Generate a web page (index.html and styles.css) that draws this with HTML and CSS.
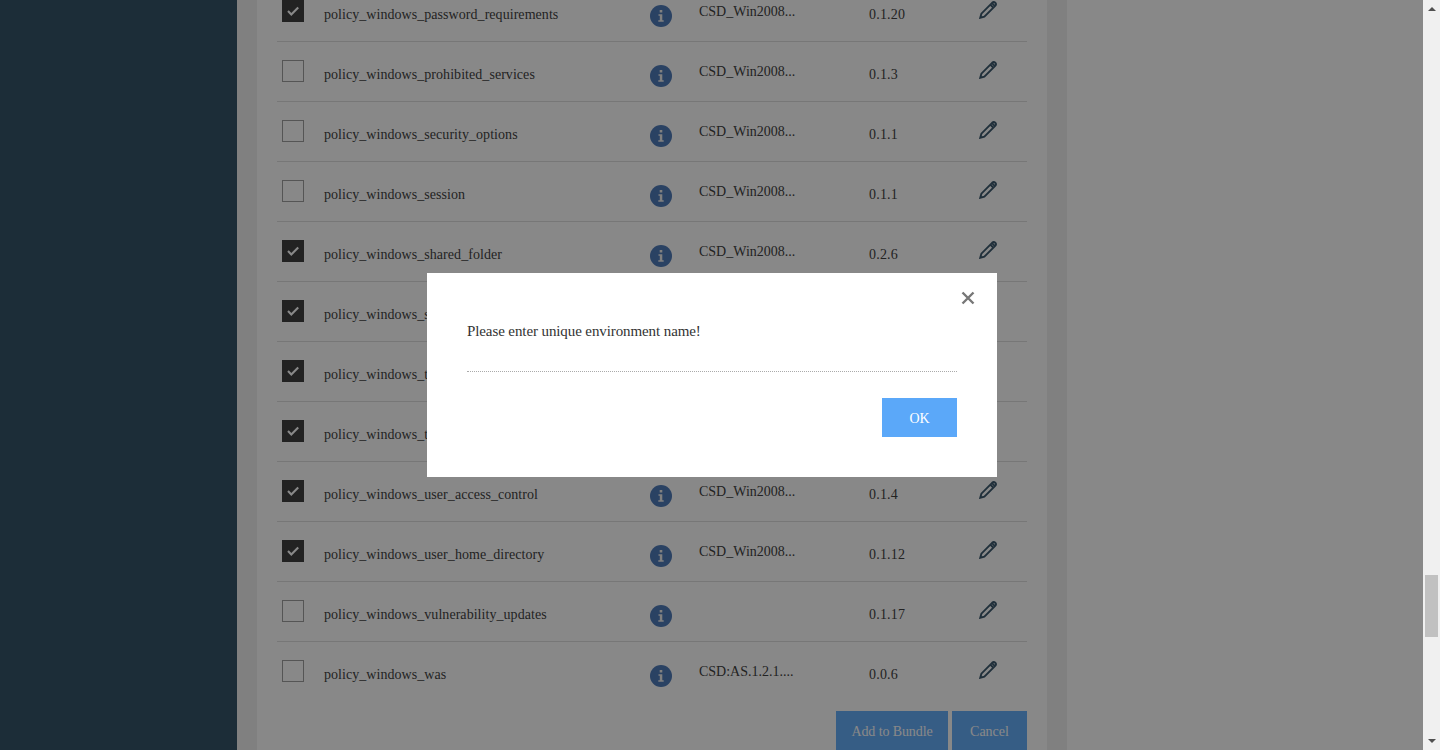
FILE: index.html
```html
<!DOCTYPE html>
<html lang="en">
<head>
<meta charset="utf-8">
<title>Bundle policies</title>
<link rel="stylesheet" href="styles.css">
</head>
<body>
<svg class="sprite" aria-hidden="true">
  <symbol id="pencil" viewBox="0.6 0.6 18.8 18.8"><path d="M1.9 18.1 3.1 13.8 14.3 2.5Q16 .9 17.6 2.4T17.5 5.7L6.2 16.9ZM12.4 4.4l3.2 3.2M14.2 2.8l3 3.2" fill="none" stroke="currentColor" stroke-width="2"/></symbol>
  <symbol id="info" viewBox="0 0 22 22"><circle cx="11" cy="11" r="11" fill="#4272b4"/><path d="M9.7 5h2.6v2.5H9.7zM8.5 9.2h3.8v6h1.4v1.6H8.3v-1.6h1.5v-4.4H8.5z" fill="#eee"/></symbol>
  <symbol id="check" viewBox="0 0 22 22"><path d="m6 11 3.3 3.4 6.9-6.9" fill="none" stroke="#fff" stroke-width="2.1"/></symbol>
</svg>
<div class="app">
  <aside class="sidebar"></aside>
  <main class="content"><div class="card"><div class="rows" id="rows"></div>
    <div class="actions"><button class="btn add">Add to Bundle</button><button class="btn cancel">Cancel</button></div>
  </div></main>
  <div class="blank"></div>
  <div class="scrollbar"><i class="up"></i><i class="thumb"></i><i class="down"></i></div>
</div>
<div class="overlay">
  <section class="modal" role="dialog">
    <button class="close" aria-label="Close"><svg width="14" height="14" viewBox="0 0 14 14"><path d="M1.5 1.5l11 11M12.5 1.5l-11 11" stroke="#777" stroke-width="2.4"/></svg></button>
    <p class="message"><span>Please enter unique environment name!</span></p>
    <div class="modal-actions"><button class="btn ok">OK</button></div>
  </section>
</div>
<script src="rows.js"></script>
</body>
</html>
```
FILE: styles.css
```css
* { box-sizing: border-box; }
body { margin: 0; height: 750px; overflow: hidden; font: 14px/20px "Liberation Serif", "Times New Roman", serif; color: #333; }
.sprite { display: none; }
.app { display: flex; height: 750px; overflow: hidden; }
.sidebar { width: 237px; background: #27495f; }
.content { width: 830px; padding: 0 20px; background: #efefef; }
.card { height: 750px; padding: 0 20px; background: #fff; overflow: hidden; }
.rows { margin-top: -18px; }
.row { display: grid; grid-template-columns: 46px 327px 49px 170px 110px 48px; height: 60px; border-bottom: 1px solid #ddd; }
.row:last-child { border-color: transparent; }
.box { width: 22px; height: 22px; margin: 18px 0 0 5px; border: 1px solid #999; }
.box.on { background: #333; border: 0; }
.box svg { display: block; }
.name { padding: 23px 0 0 1px; letter-spacing: .05px; }
.info { width: 22px; height: 22px; margin-top: 23px; }
.os { padding-top: 20px; }
.version { padding-top: 23px; letter-spacing: .2px; }
.edit { width: 18px; height: 18px; margin-top: 19px; color: #304f65; }
.actions { display: flex; justify-content: flex-end; gap: 4px; margin-top: 9px; }
.btn { height: 39px; padding: 2px 0 0; border: 0; background: #5ba8f9; color: #fff; font: inherit; }
.add { width: 112px; letter-spacing: -.1px; }
.cancel, .ok { width: 75px; }
.blank { flex: 1; background: #fff; }
.scrollbar { width: 17px; background: #f0f0f0; display: flex; flex-direction: column; align-items: center; position: relative; z-index: 2; }
.scrollbar .up, .scrollbar .down { border: 4px solid transparent; border-top: 0; border-bottom: 4px solid #505050; margin-top: 7px; }
.scrollbar .thumb { width: 13px; height: 62px; margin: 564px 2px 0; background: #c1c1c1; align-self: flex-start; }
.scrollbar .down { border-bottom: 0; border-top: 4px solid #505050; margin-top: 102px; }
.overlay { position: absolute; inset: 0 17px 0 0; background: rgba(17,17,17,.5); display: flex; align-items: center; justify-content: center; }
.modal { position: relative; width: 570px; height: 204px; margin-right: -1px; padding: 48px 40px 0; background: #fff; }
.close { position: absolute; right: 22px; top: 18px; padding: 0; border: 0; background: none; width: 14px; height: 14px; }
.close svg { display: block; }
.message { margin: 0; height: 51px; border-bottom: 1px dotted #aaa; font-size: 15px; letter-spacing: -.1px; }
.modal-actions { display: flex; justify-content: flex-end; padding-top: 26px; }
```
FILE: rows.js
```js
const policies = [
  ["password_requirements", "CSD_Win2008...", "0.1.20", true],
  ["prohibited_services", "CSD_Win2008...", "0.1.3", false],
  ["security_options", "CSD_Win2008...", "0.1.1", false],
  ["session", "CSD_Win2008...", "0.1.1", false],
  ["shared_folder", "CSD_Win2008...", "0.2.6", true],
  ["s", "", "", true],
  ["t", "", "", true],
  ["t", "", "", true],
  ["user_access_control", "CSD_Win2008...", "0.1.4", true],
  ["user_home_directory", "CSD_Win2008...", "0.1.12", true],
  ["vulnerability_updates", "", "0.1.17", false],
  ["was", "CSD:AS.1.2.1....", "0.0.6", false]
];
const icon = (id, cls) => `<svg class="${cls}"><use href="#${id}"/></svg>`;
document.getElementById("rows").innerHTML = policies.map(([name, os, version, on]) => `
  <div class="row">
    <div class="box${on ? " on" : ""}">${on ? '<svg width="22" height="22"><use href="#check"/></svg>' : ""}</div>
    <div class="name"><span>policy_windows_${name}</span></div>
    ${icon("info", "info")}
    <div class="os"><span>${os}</span></div>
    <div class="version"><span>${version}</span></div>
    ${icon("pencil", "edit")}
  </div>`).join("");
```
